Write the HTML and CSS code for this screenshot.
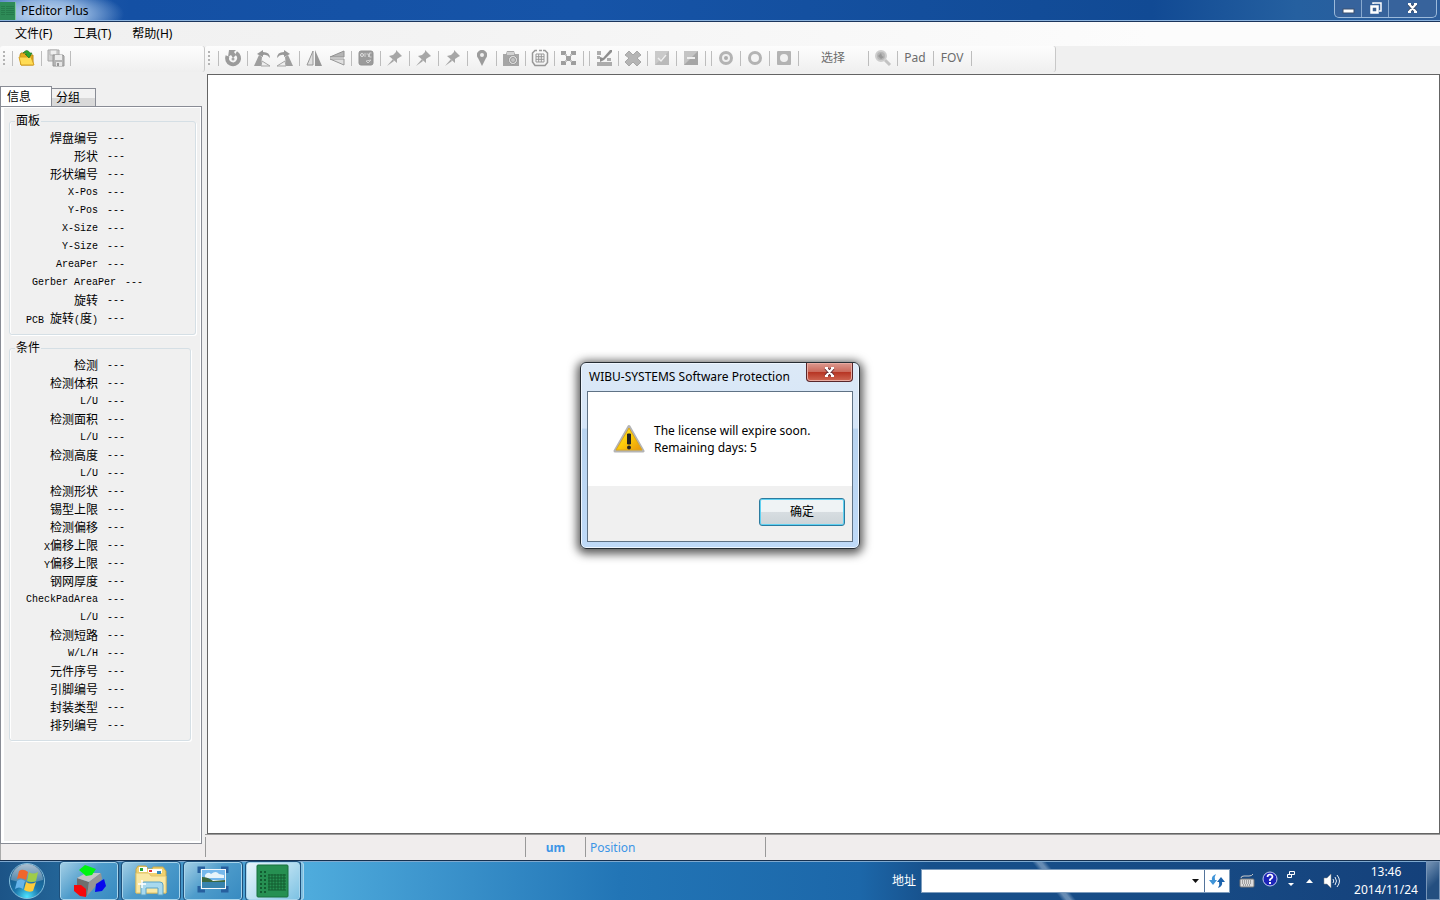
FILE: index.html
```html
<!DOCTYPE html>
<html lang="zh-CN">
<head>
<meta charset="utf-8">
<title>PEditor Plus</title>
<link rel="stylesheet" href="styles.css">
</head>
<body>
<header class="titlebar">
  <svg class="app-icon" width="16" height="18" viewBox="0 0 16 18"><rect width="16" height="18" fill="#2e8b57"/><path d="M2 4v10M4 4v10M7 4v10M9 4v10M11 4v10M13 4v10" stroke="#1d6a40" stroke-dasharray="1 1"/><path d="M15.500 0V18" stroke="#7fc79a"/></svg>
  <h1 class="app-title">PEditor Plus</h1>
  <div class="win-controls">
    <button class="win-btn" aria-label="Minimize"><svg width="13" height="12" viewBox="0 0 13 12"><rect x="1" y="7" width="11" height="4" fill="#fff" stroke="#3c506e"/></svg></button>
    <button class="win-btn" aria-label="Restore"><svg width="13" height="12" viewBox="0 0 13 12"><path d="M4 2V1h8v8h-2" fill="none" stroke="#fff" stroke-width="1.500"/><path d="M2.500 4.500h6v6h-6z" fill="#3c6090" stroke="#fff" stroke-width="2.500"/></svg></button>
    <button class="win-btn win-close" aria-label="Close"><svg width="13" height="12" viewBox="0 0 13 12"><path d="M3 2l7 8M10 2l-7 8" stroke="#3c506e" stroke-width="4"/><path d="M3 2l7 8M10 2l-7 8M2 2h3M8 2h3M2 10h3M8 10h3" stroke="#fff" stroke-width="2"/></svg></button>
  </div>
</header>
<nav class="menubar">
  <button class="menu">文件(F)</button>
  <button class="menu">工具(T)</button>
  <button class="menu">帮助(H)</button>
</nav>
<main class="workspace">
  <aside class="sidebar">
    <div class="toolbar">
      <span class="grip"></span><span class="sep"></span>
      <button class="tool tool-color" aria-label="打开"><svg width="18" height="18" viewBox="0 0 18 18"><path d="M2 6l1-2h4l1 2h7v10H3z" fill="#e5ac1c" stroke="#b98a18"/><path d="M1 8h12l3 8H3z" fill="#ffdc55" stroke="#d5a020"/><path d="M5 4q4-5 7 0h2l-3 5-4-4h2Q8 3 5 4z" fill="#2da52f" stroke="#176a1a" stroke-width=".6"/></svg></button>
      <span class="sep"></span>
      <button class="tool" aria-label="保存"><svg width="18" height="18" viewBox="0 0 18 18"><path d="M1 1h11v11H1z" fill="#ccc" stroke="#999"/><path d="M3 1h7v5H3z" fill="#eee" stroke="#aaa"/><path d="M6 6h10l1 1v10H6z" fill="#aaa" stroke="#888"/><path d="M8 6h7v5H8z" fill="#ececec"/><path d="M9 13h6v4H9z" fill="#e4e4e4"/><path d="M10 14h2v3h-2z" fill="#888"/></svg></button>
      <span class="sep"></span>
    </div>
    <div class="tabs" role="tablist">
      <button class="tab tab-active" role="tab" aria-selected="true">信息</button>
      <button class="tab" role="tab" aria-selected="false">分组</button>
    </div>
    <section class="tab-page">
      <div class="page-inner">
        <fieldset class="group">
          <legend>面板</legend>
          <dl class="props">
            <div class="row"><dt>焊盘编号</dt><dd>---</dd></div>
            <div class="row"><dt>形状</dt><dd>---</dd></div>
            <div class="row"><dt>形状编号</dt><dd>---</dd></div>
            <div class="row"><dt class="latin">X-Pos</dt><dd>---</dd></div>
            <div class="row"><dt class="latin">Y-Pos</dt><dd>---</dd></div>
            <div class="row"><dt class="latin">X-Size</dt><dd>---</dd></div>
            <div class="row"><dt class="latin">Y-Size</dt><dd>---</dd></div>
            <div class="row"><dt class="latin">AreaPer</dt><dd>---</dd></div>
            <div class="row row-wide"><dt class="latin">Gerber AreaPer</dt><dd>---</dd></div>
            <div class="row"><dt>旋转</dt><dd>---</dd></div>
            <div class="row"><dt><span class="latin">PCB </span>旋转<span class="latin">(</span>度<span class="latin">)</span></dt><dd>---</dd></div>
          </dl>
        </fieldset>
        <fieldset class="group group-narrow">
          <legend>条件</legend>
          <dl class="props">
            <div class="row"><dt>检测</dt><dd>---</dd></div>
            <div class="row"><dt>检测体积</dt><dd>---</dd></div>
            <div class="row"><dt class="latin">L/U</dt><dd>---</dd></div>
            <div class="row"><dt>检测面积</dt><dd>---</dd></div>
            <div class="row"><dt class="latin">L/U</dt><dd>---</dd></div>
            <div class="row"><dt>检测高度</dt><dd>---</dd></div>
            <div class="row"><dt class="latin">L/U</dt><dd>---</dd></div>
            <div class="row"><dt>检测形状</dt><dd>---</dd></div>
            <div class="row"><dt>锡型上限</dt><dd>---</dd></div>
            <div class="row"><dt>检测偏移</dt><dd>---</dd></div>
            <div class="row"><dt><span class="latin">X</span>偏移上限</dt><dd>---</dd></div>
            <div class="row"><dt><span class="latin">Y</span>偏移上限</dt><dd>---</dd></div>
            <div class="row"><dt>钢网厚度</dt><dd>---</dd></div>
            <div class="row"><dt class="latin">CheckPadArea</dt><dd>---</dd></div>
            <div class="row"><dt class="latin">L/U</dt><dd>---</dd></div>
            <div class="row"><dt>检测短路</dt><dd>---</dd></div>
            <div class="row"><dt class="latin">W/L/H</dt><dd>---</dd></div>
            <div class="row"><dt>元件序号</dt><dd>---</dd></div>
            <div class="row"><dt>引脚编号</dt><dd>---</dd></div>
            <div class="row"><dt>封装类型</dt><dd>---</dd></div>
            <div class="row"><dt>排列编号</dt><dd>---</dd></div>
          </dl>
        </fieldset>
      </div>
    </section>
    <div class="side-status"></div>
  </aside>
  <section class="editor">
    <div class="toolbar toolbar-main">
      <span class="grip"></span><span class="sep"></span>
      <button class="tool" aria-label="刷新"><svg width="18" height="18" viewBox="0 0 18 18"><path d="M3.500 7A6 6 0 1 0 12 4" fill="none" stroke="#8c8c8c" stroke-width="4"/><path d="M5 1h7l-2 2 2 3-3 3-2-3-3 2z" fill="#8c8c8c"/><circle cx="9" cy="10" r="1.500" fill="#999"/></svg></button>
      <span class="sep"></span>
      <button class="tool" aria-label="左转"><svg width="18" height="18" viewBox="0 0 18 18"><path d="M6 6L1 17h7L9 8z" fill="#909090"/><path d="M9 12l8 5H8z" fill="#eee" stroke="#999"/><path d="M4 5l6-4v2q7 0 7 6-3-4-7-3v2z" fill="#888"/></svg></button>
      <button class="tool" aria-label="右转"><svg width="18" height="18" viewBox="0 0 18 18"><path d="M12 6l5 11h-7L9 8z" fill="#909090"/><path d="M9 12l-8 5h9z" fill="#eee" stroke="#999"/><path d="M14 5L8 1v2Q1 3 1 9q3-4 7-3v2z" fill="#888"/></svg></button>
      <span class="sep"></span>
      <button class="tool" aria-label="水平翻转"><svg width="18" height="18" viewBox="0 0 18 18"><path d="M8 2v14H2z" fill="#ddd" stroke="#888"/><path d="M10 1l7 16h-7z" fill="#888"/></svg></button>
      <button class="tool" aria-label="垂直翻转"><svg width="18" height="18" viewBox="0 0 18 18"><path d="M16 2v6H2z" fill="#aaa" stroke="#808080"/><path d="M2 10h14v6z" fill="#ddd" stroke="#888"/></svg></button>
      <span class="sep"></span>
      <button class="tool" aria-label="标记"><svg width="18" height="18" viewBox="0 0 18 18"><rect x="2" y="2" width="14" height="14" rx="2" fill="#8c8c8c" stroke="#808080"/><circle cx="5" cy="6" r="1.500" fill="none" stroke="#ddd"/><path d="M8 4v4M9.500 5h2v3M14.500 4h-2v4h2M9 12l5-1-3 3z" fill="none" stroke="#ccc"/></svg></button>
      <span class="sep"></span>
      <button class="tool" aria-label="图钉一"><svg width="18" height="18" viewBox="0 0 18 18"><path d="M10 1l6 6-2 1-3 2v4L3 7l4-1 3-3z" fill="#999"/><path d="M7 10l-6 7 7-5z" fill="#999"/></svg></button>
      <span class="sep"></span>
      <button class="tool" aria-label="图钉二"><svg width="18" height="18" viewBox="0 0 18 18"><path d="M10 1l6 6-2 1-3 2v4L3 7l4-1 3-3z" fill="#999"/><path d="M7 10l-6 7 7-5z" fill="#999"/></svg></button>
      <span class="sep"></span>
      <button class="tool" aria-label="图钉三"><svg width="18" height="18" viewBox="0 0 18 18"><path d="M10 1l6 6-2 1-3 2v4L3 7l4-1 3-3z" fill="#999"/><path d="M7 10l-6 7 7-5z" fill="#999"/></svg></button>
      <span class="sep"></span>
      <button class="tool" aria-label="定位"><svg width="18" height="18" viewBox="0 0 18 18"><path d="M9 17L5 9a5 5 0 1 1 8 0z" fill="#8c8c8c"/><circle cx="9" cy="6" r="2" fill="#eee"/></svg></button>
      <span class="sep"></span>
      <button class="tool" aria-label="拍照"><svg width="18" height="18" viewBox="0 0 18 18"><path d="M1 5h3l1-3h7l1 3h4v12H1z" fill="#999"/><path d="M5 3h7v3H5z" fill="#ccc"/><circle cx="11" cy="11" r="4.500" fill="#ddd" stroke="#888"/><circle cx="11" cy="11" r="2.500" fill="#bbb" stroke="#888"/></svg></button>
      <span class="sep"></span>
      <button class="tool" aria-label="阵列"><svg width="18" height="18" viewBox="0 0 18 18"><path d="M6 1.500H4L1.500 4v9L4 16.500h10l2.500-3V4L14 1.500h-2M8 1.500h3" fill="none" stroke="#888" stroke-width="1.500"/><path d="M5 5h8v8H5zM5 7.700h8M5 10.300h8M7.700 5v8M10.300 5v8" fill="none" stroke="#888"/></svg></button>
      <span class="sep"></span>
      <button class="tool" aria-label="棋盘"><svg width="18" height="18" viewBox="0 0 18 18"><path d="M1 2h5v4H1zM11 2h5v4h-5zM6 7h5v5H6zM1 12h5v4H1zM11 12h5v4h-5z" fill="#909090"/><path d="M5 5h2v2H5zM10 5h2v2h-2zM5 11h2v2H5zM10 11h2v2h-2z" fill="#bbb"/></svg></button>
      <span class="sep"></span><span class="sep"></span>
      <button class="tool" aria-label="编辑"><svg width="18" height="18" viewBox="0 0 18 18"><path d="M2 2h4v4H2zM2 7h3v3H2zM2 13h15v4H2zM12 9h4v3h-4z" fill="#a0a0a0"/><path d="M17 1v2L9 11l-4 2V8l3 1 7-8z" fill="#7c7c7c"/></svg></button>
      <span class="sep"></span>
      <button class="tool" aria-label="删除"><svg width="18" height="18" viewBox="0 0 18 18"><path d="M5 2l4 4 4-4 4 4-4 3 4 4-4 4-4-4-4 4-4-4 4-4-4-3z" fill="#aaa" stroke="#999"/></svg></button>
      <span class="sep"></span>
      <button class="tool" aria-label="选中"><svg width="18" height="18" viewBox="0 0 18 18"><path d="M2 2h14v14H2z" fill="#c2c2c2"/><path d="M16 2v14H2z" fill="#b0b0b0"/><path d="M5 9l3 3 5-6" fill="none" stroke="#eee" stroke-width="1.500"/></svg></button>
      <span class="sep"></span>
      <button class="tool" aria-label="取消"><svg width="18" height="18" viewBox="0 0 18 18"><path d="M2 2h14v14H2z" fill="#bbb"/><path d="M16 2v14H2z" fill="#999"/><path d="M5 9h8" stroke="#eee" stroke-width="2"/></svg></button>
      <span class="sep"></span><span class="sep"></span>
      <button class="tool" aria-label="圆环一"><svg width="18" height="18" viewBox="0 0 18 18"><circle cx="9" cy="9" r="5.500" fill="#eee" stroke="#a8a8a8" stroke-width="3"/><circle cx="9" cy="9" r="2" fill="#a0a0a0"/></svg></button>
      <span class="sep"></span>
      <button class="tool" aria-label="圆环二"><svg width="18" height="18" viewBox="0 0 18 18"><circle cx="9" cy="9" r="5.500" fill="#f4f4f4" stroke="#a8a8a8" stroke-width="3"/></svg></button>
      <span class="sep"></span>
      <button class="tool" aria-label="方形"><svg width="18" height="18" viewBox="0 0 18 18"><rect x="2" y="2" width="14" height="14" rx="1" fill="#a8a8a8"/><circle cx="9" cy="9" r="4" fill="#f0f0f0"/></svg></button>
      <span class="sep"></span>
      <button class="tool tool-text tool-select">选择</button>
      <span class="sep"></span>
      <button class="tool" aria-label="缩放"><svg width="18" height="18" viewBox="0 0 18 18"><path d="M11 11l5 5" stroke="#bbb" stroke-width="3"/><circle cx="7" cy="7" r="5" fill="#aaa" stroke="#c6c6c6" stroke-width="2"/><path d="M4 7l3-3 1 3 2 1-3 2z" fill="#888"/></svg></button>
      <span class="sep"></span>
      <button class="tool tool-text">Pad</button>
      <span class="sep"></span>
      <button class="tool tool-text tool-fov">FOV</button>
      <span class="sep"></span>
    </div>
    <div class="canvas"></div>
    <footer class="statusbar">
      <span class="cell cell-msg"></span>
      <span class="cell cell-unit">um</span>
      <span class="cell cell-pos">Position</span>
      <span class="cell"></span>
    </footer>
  </section>
</main>
<footer class="taskbar">
  <button class="start" aria-label="开始"><svg width="38" height="38" viewBox="0 0 38 38"><defs><radialGradient id="orb" cx=".5" cy=".95" r=".9"><stop offset="0" stop-color="#4ee4ff"/><stop offset=".4" stop-color="#1b76ac"/><stop offset="1" stop-color="#17507e"/></radialGradient><linearGradient id="gloss" x2="0" y2="1"><stop offset="0" stop-color="#fff" stop-opacity=".65"/><stop offset="1" stop-color="#fff" stop-opacity=".2"/></linearGradient></defs><circle cx="19" cy="19" r="17.500" fill="url(#orb)" stroke="#84bfdd"/><path d="M3 18a16 16 0 0 1 32 0q-16 5-32 0z" fill="url(#gloss)"/><path d="M11 9q4-3 9 1l-2 8q-5-3-9-1z" fill="#f0662b"/><path d="M21 10q4 3 9 0l-2 9q-4 2-9 0z" fill="#9fcc4a"/><path d="M9 19q4-3 8 0l-2 8q-4-3-8 0z" fill="#66b4ea"/><path d="M18 20q5 3 10 0l-3 9q-4 2-9-1z" fill="#fdcb3b"/></svg></button>
  <div class="tasks">
    <button class="task" aria-label="3D"><svg width="34" height="34" viewBox="0 0 34 34"><path d="M5 14l12 4-2 14-10-6z" fill="#6e6e6e"/><path d="M5 14L14 9l15 0-12 9z" fill="#c4c4c4"/><path d="M17 18L29 9l1 6-15 17z" fill="#959595"/><path d="M7 6l6-5 11 4-4 6-6 1z" fill="#00f410"/><path d="M2 21l7 0 5 4v8l-6-1-6-5z" fill="#f5080c"/><path d="M24 20l8-5 2 7-4 5-7 1z" fill="#0808ed"/></svg></button>
    <button class="task" aria-label="资源管理器"><svg width="34" height="34" viewBox="0 0 34 34"><path d="M2 5l2-3h8l2 3h4l1-2h10l3 4v22H2z" fill="#efd26f" stroke="#c6a64c"/><path d="M5 3h8v5H5zM14 5h14v4H14z" fill="#fff"/><path d="M6 4h3v3H6z" fill="#26a337"/><path d="M15 6h3v2h-3z" fill="#d33"/><path d="M23 7h4v3h-4z" fill="#38b"/><path d="M2 9h13l2 3h15v17H2z" fill="#f9e8a4" stroke="#e2c46b"/><path d="M7 31V21q0-3 3-3h16q3 0 3 3v10h-5v-7H12v7z" fill="#a8d9ee" stroke="#5ba2c6"/><path d="M8 16v8M4 20h8" stroke="#fff" stroke-width="1.500"/></svg></button>
    <button class="task" aria-label="图片"><svg width="34" height="34" viewBox="0 0 34 34"><path d="M3 9V4h6M25 4h6v5M31 22v5h-6M9 27H3v-5" fill="none" stroke="#265f9e" stroke-width="3"/><path d="M5 5h25v20H5z" fill="#f5f8fa"/><path d="M6 6h23v10H6z" fill="#76b8ec"/><path d="M9 11q3-4 6-1 5-4 8 0l5 1v3H9z" fill="#e8f4fa"/><path d="M6 13q6 0 11 4l12-1v3H6z" fill="#3c683f"/><path d="M6 18h23v6H6z" fill="#3883ae"/></svg></button>
    <button class="task task-active" aria-label="PEditor Plus"><svg width="34" height="34" viewBox="0 0 34 34"><rect x="1" y="1" width="31" height="32" rx="1" fill="#269052" stroke="#16713c"/><path d="M5 7v22M9 7v22" stroke="#125c31" stroke-width="2" stroke-dasharray="2 2"/><path d="M13 10v16M16 10v16M19 10v16M22 10v16M25 10v16M28 10v16M12 11h18M12 14h18M12 17h18M12 20h18M12 23h18M12 26h18" stroke="#125c31"/></svg></button>
    <span class="task-stack"></span>
  </div>
  <div class="address">
    <label for="addr">地址</label>
    <div class="combo">
      <input id="addr" type="text">
      <button class="drop" aria-label="展开"><svg width="9" height="6" viewBox="0 0 9 6"><path d="M1 1h7L4.500 5z" fill="#111"/></svg></button>
      <button class="go" aria-label="刷新地址"><svg width="16" height="16" viewBox="0 0 16 16"><path d="M7 1Q2 3 3 7H0l4 5 4-5H6Q5 4 7 1z" fill="#3f94d8"/><path d="M9 15q5-2 4-6h3l-4-5-4 5h2q1 3-1 6z" fill="#1b62ac"/></svg></button>
    </div>
  </div>
  <div class="tray">
    <svg width="16" height="16" viewBox="0 0 16 16"><path d="M2 5q0-2 3-2h5q3 0 4-2" fill="none" stroke="#ccc"/><rect x="1" y="6" width="14" height="8" rx="1" fill="#ddd" stroke="#777"/><path d="M3 8h10M3 10h10M4 12h8" stroke="#666" stroke-dasharray="1 1"/></svg>
    <svg class="help" width="16" height="16" viewBox="0 0 16 16"><circle cx="8" cy="8" r="7" fill="#1c24b8" stroke="#c2c9ef"/><path d="M5.500 6q0-2.500 2.500-2.500T10.500 6Q10.500 7 8 8.500V10" fill="none" stroke="#fff" stroke-width="1.700"/><path d="M7 11h2v2H7z" fill="#fff"/></svg>
    <svg class="lang" width="10" height="18" viewBox="0 0 10 18"><path d="M3.500 1.500h5v3h-5zM1.500 4.500h4v3h-4z" fill="#244f86" stroke="#fff"/><path d="M2 13h6l-3 3z" fill="#fff"/></svg>
    <svg width="9" height="6" viewBox="0 0 9 6"><path d="M1 5h7L4.500 1z" fill="#fff"/></svg>
    <svg width="18" height="16" viewBox="0 0 18 16"><path d="M1 5h3l4-4v14l-4-4H1z" fill="#fff" stroke="#888" stroke-width=".5"/><path d="M10 6q1.500 2 0 4M12 4q3 4 0 8M14 2q5 6 0 12" fill="none" stroke="#e8eef5"/></svg>
    <time class="clock" datetime="2014-11-24T13:46"><span>13:46</span><span>2014/11/24</span></time>
  </div>
  <button class="show-desktop" aria-label="显示桌面"></button>
</footer>
<div class="modal-layer">
  <section class="dialog" role="dialog" aria-labelledby="dlg-title">
    <header class="dialog-head">
      <h2 id="dlg-title">WIBU-SYSTEMS Software Protection</h2>
      <button class="dialog-close" aria-label="关闭"><svg width="13" height="10" viewBox="0 0 13 10"><path d="M3 1l7 8M10 1L3 9" stroke="#6a3038" stroke-width="4"/><path d="M3 1l7 8M10 1L3 9M2 1h3M8 1h3M2 9h3M8 9h3" stroke="#fff" stroke-width="2"/></svg></button>
    </header>
    <div class="dialog-body">
      <div class="message">
        <svg width="32" height="30" viewBox="0 0 32 30"><defs><linearGradient id="warn" x2="1" y2="1"><stop offset="0" stop-color="#ffef35"/><stop offset=".5" stop-color="#fccb0a"/><stop offset="1" stop-color="#e8930c"/></linearGradient></defs><path d="M16 2.500L30 27H2z" fill="#ccc" stroke="#b4b4b4" stroke-width="3" stroke-linejoin="round"/><path d="M16 4L29 26H3z" fill="url(#warn)" stroke="#dca61c"/><path d="M14.500 10h3v10h-3z" fill="#222" stroke="#222"/><circle cx="16" cy="23.500" r="2" fill="#222"/></svg>
        <p>The license will expire soon.<br>Remaining days: 5</p>
      </div>
      <div class="actions"><button class="ok">确定</button></div>
    </div>
  </section>
</div>
</body>
</html>
```

FILE: styles.css
```css
* { box-sizing: border-box; }

body {
  margin: 0;
  height: 100vh;
  display: flex;
  flex-direction: column;
  overflow: hidden;
  background: #f0f0f0;
  color: #000;
  font: 12px/16px "Noto Sans", "Noto Sans CJK SC", sans-serif;
}

button {
  margin: 0;
  padding: 0;
  border: 0;
  background: none;
  color: inherit;
  font: inherit;
}

h1, h2, p, dl, dd { margin: 0; }
h1, h2 { font-size: 12px; font-weight: 400; }
svg { display: block; flex: none; }

/* Title bar */
.titlebar {
  flex: none;
  display: flex;
  height: 22px;
  border-bottom: 1px solid #1b355c;
  box-shadow: inset 0 -1px #8db4de;
  background:
    radial-gradient(ellipse 80px 26px at 44px 14px, #c4d8f0 0, #8eb2de 50%, transparent 100%),
    linear-gradient(90deg, #2b62ae 0, #1450a4 130px, #1654a8 40%, #114a94 80%, #2560a0 90%, #2d5e9c 100%);
}
.app-icon { margin-top: 2px; }
.app-title { margin-left: 5px; line-height: 21px; }
.win-controls {
  display: flex;
  height: 18px;
  margin: 0 3px 0 auto;
  border: 1px solid #9cbadb;
  border-top: 0;
  border-radius: 0 0 5px 5px;
  background: #37639c;
}
.win-btn {
  display: flex;
  justify-content: center;
  width: 27px;
  padding-top: 2px;
  border-right: 1px solid #88a9cf;
}
.win-close { width: 47px; border-right: 0; }

/* Menu bar */
.menubar {
  flex: none;
  display: flex;
  gap: 21px;
  height: 24px;
  padding-left: 15px;
  background: linear-gradient(90deg, #f0f0f0 0, #f3f3f3 30%, #fcfcfc 80%);
}

/* Workspace */
.workspace { flex: 1; display: flex; min-height: 0; }
.sidebar { flex: none; display: flex; flex-direction: column; width: 205px; }
.editor { flex: 1; min-width: 0; display: flex; flex-direction: column; }

.toolbar {
  flex: none;
  display: flex;
  align-items: center;
  height: 26px;
  padding: 0 0 2px 3px;
  border-right: 1px solid #c8c8c8;
  border-radius: 3px;
  background: linear-gradient(#fdfdfd, #efefef);
}
.toolbar-main { width: 851px; max-width: 100%; }
.grip {
  width: 2px;
  height: 14px;
  margin-right: 4px;
  background: repeating-linear-gradient(#b4b4b4 0, #b4b4b4 2px, transparent 2px, transparent 4px);
}
.toolbar-main .grip { margin-right: 5px; }
.sep { flex: none; width: 1px; height: 15px; margin: 0 2px 0 3px; background: #bdbdbd; }
.tool {
  flex: none;
  display: flex;
  align-items: center;
  justify-content: center;
  width: 23px;
  height: 22px;
}
.tool svg { opacity: .85; }
.tool-color svg { opacity: 1; }
.tool-text { width: 30px; color: #6c6c6c; }
.tool-select { width: 64px; }
.tool-fov { width: 32px; }

/* Side tabs */
.tabs { flex: none; display: flex; align-items: flex-end; height: 20px; margin-top: 14px; }
.tab {
  width: 44px;
  height: 18px;
  padding: 1px 4px 0;
  border: 1px solid #898c95;
  border-left: 0;
  border-bottom: 0;
  background: linear-gradient(#f2f2f2 50%, #d9d9d9 50%);
  line-height: 16px;
  text-align: left;
}
.tab-active { width: 52px; height: 20px; padding-left: 6px; border-left: 1px solid #898c95; background: #fff; }
.tab-page {
  flex: 1;
  min-height: 0;
  margin-right: 3px;
  padding: 1px 1px 2px 3px;
  border: 1px solid #898c95;
  background: #fff;
}
.page-inner { height: 100%; padding: 4px 4px 0 5px; background: #f0f0f0; }
.side-status { flex: none; height: 16px; border-left: 1px solid #aaa; background: #f0eded; }

.group {
  min-width: 0;
  margin: 0 0 4px;
  padding: 0 0 6px;
  border: 1px solid #d5dfe5;
  border-radius: 3px;
  box-shadow: inset 1px 0 #fff, 1px 1px #fff;
}
.group-narrow { margin-right: 5px; padding-bottom: 5px; }
.group legend { margin-left: 5px; padding: 0 1px; line-height: 18px; }
.row { display: grid; grid-template-columns: 88px 1fr; column-gap: 9px; height: 18px; line-height: 18px; }
.row-wide { grid-template-columns: 106px 1fr; }
.row dt { text-align: right; white-space: nowrap; }
.latin, .row dd { font-family: "Liberation Mono", monospace; font-size: 10px; white-space: pre; }

/* Canvas and status bar */
.canvas { flex: 1; margin: 2px 0 0 2px; border: 1px solid #646464; background: #fff; }
.statusbar {
  flex: none;
  display: flex;
  height: 26px;
  padding: 2px 0 3px;
  background: #f0eded;
  border-top: 1px solid #999;
  color: #3d95e6;
  line-height: 21px;
}
.cell { border-left: 1px solid #999; }
.cell-msg { width: 320px; }
.cell-unit { width: 60px; font-weight: 700; text-align: center; }
.cell-pos { width: 180px; padding-left: 4px; }

/* Taskbar */
.taskbar {
  flex: none;
  display: flex;
  height: 40px;
  border-top: 1px solid #16304f;
  box-shadow: inset 0 1px #7fa9cf;
  background:
    linear-gradient(52deg, transparent 42%, #8aa8c8b0 48%, #8aa8c8b0 52%, transparent 58%) 1024px 0 / 60px 40px no-repeat,
    linear-gradient(90deg, #1c5487 0, #236497 60px, #4596c9 180px, #4eabdc 310px, #3d95cd 430px, #2275b6 620px, #1c67a9 860px, #17508b 930px, #174a84 1200px, #14407a 100%);
  color: #fff;
}
.start { width: 54px; padding-left: 8px; }
.tasks { display: flex; gap: 4px; margin-left: 6px; }
.task {
  display: flex;
  align-items: center;
  justify-content: center;
  width: 58px;
  height: 38px;
  margin-top: 1px;
  border: 1px solid #a8d5ec;
  border-radius: 3px;
  outline: 1px solid #1e507b;
  background: linear-gradient(135deg, #a2cee5, #4e9ccb 45%, #388bc1);
}
.task-active { width: 54px; background: linear-gradient(135deg, #e8f5fb, #b8dff1 50%, #7dc2e3); }
.task-stack { width: 4px; height: 38px; margin: 1px 0 0 -4px; border: 1px solid #a8d5ec; border-left-color: #1e507b; border-radius: 0 3px 3px 0; background: #80bfe0; }
.address { display: flex; align-items: center; gap: 5px; margin-left: auto; }
.combo { display: flex; width: 309px; height: 24px; border: 1px solid #7e9dbd; background: #fff; }
.combo input { flex: 1; min-width: 0; border: 0; padding: 0 4px; outline: 0; font: inherit; }
.drop, .go { display: flex; align-items: center; justify-content: center; width: 18px; }
.go { width: 25px; border-left: 1px solid #53749b; }
.tray { display: flex; align-items: center; gap: 9px; margin-left: 9px; }
.tray .help { margin: 0 -1px 4px -2px; }
.tray .lang { margin-bottom: 4px; }
.clock { display: flex; flex-direction: column; width: 72px; line-height: 18px; text-align: center; }
.show-desktop { width: 14px; margin-left: 4px; border: 1px solid #7795b8; background: linear-gradient(135deg, #7895b6, #244f80 60%); }

/* Message box */
.modal-layer {
  position: absolute;
  inset: 48px 0 38px;
  display: flex;
  align-items: center;
  justify-content: center;
  pointer-events: none;
}
.dialog {
  pointer-events: auto;
  width: 280px;
  padding: 0 6px 6px;
  border: 1px solid #252c33;
  border-radius: 6px;
  box-shadow: inset 0 0 0 1px #eef6ff, 0 2px 10px 3px rgba(0, 0, 0, .65);
  background: linear-gradient(#dce9f7 0, #d5e5f7 35%, #b9d4f0 36%, #bfdaf8 100%);
}
.dialog-head { display: flex; justify-content: space-between; height: 28px; }
.dialog-head h2 { padding-left: 2px; line-height: 28px; white-space: nowrap; }
.dialog-close {
  display: flex;
  align-items: center;
  justify-content: center;
  width: 47px;
  height: 19px;
  border: 1px solid #58262b;
  border-top: 0;
  border-radius: 0 0 4px 4px;
  box-shadow: inset 0 0 0 1px #e9aca2;
  background: linear-gradient(#dc9a90 0, #cb6a5c 48%, #b63322 50%, #cf6753 100%);
}
.dialog-body { border: 1px solid #5f7285; background: #f0f0f0; }
.message { display: flex; align-items: center; gap: 9px; height: 94px; padding-left: 25px; background: #fff; line-height: 17px; }
.actions { display: flex; justify-content: flex-end; padding: 12px 7px 15px; }
.ok {
  width: 86px;
  height: 28px;
  border: 1px solid #2c7b9f;
  border-radius: 3px;
  box-shadow: inset 0 0 0 1px #5fd1f2;
  background: linear-gradient(#eff3f5 48%, #d7dde1 50%, #ccd4d8);
}
```
